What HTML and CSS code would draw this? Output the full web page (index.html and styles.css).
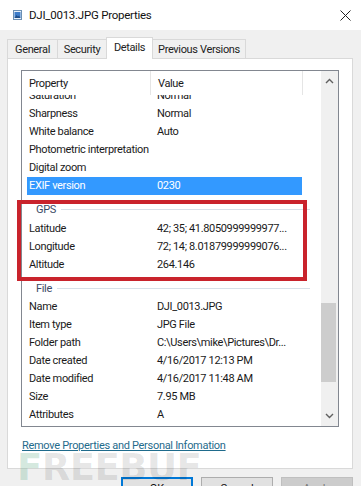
FILE: index.html
```html
<!DOCTYPE html>
<html lang="en">
<head>
  <meta charset="UTF-8" />
  <title>DJI_0013.JPG Properties</title>
  <link rel="stylesheet" href="styles.css">
</head>
<body>

  <div class="window">
    <div class="titlebar">
      <svg class="fileicon" width="9" height="10" viewBox="0 0 9 10">
        <rect x="0.5" y="0.5" width="8" height="9" fill="#e8f0f8" stroke="#6b8fb3"/>
        <rect x="1.5" y="2" width="6" height="6" fill="#3d7cc9"/>
        <path d="M1.5 8 L3.5 5 L5 6.5 L6 5.5 L7.5 8 Z" fill="#1f4f8a"/>
      </svg>
      <span class="title">DJI_0013.JPG Properties</span>
      <svg class="close" width="11" height="11" viewBox="0 0 11 11">
        <path d="M0.5 0.5 L10.5 10.5 M10.5 0.5 L0.5 10.5" stroke="#222" stroke-width="1"/>
      </svg>
    </div>

    <div class="content">
      <div class="tabs">
        <div class="tab t-general">General</div>
        <div class="tab t-security">Security</div>
        <div class="tab t-details active">Details</div>
        <div class="tab t-previous">Previous Versions</div>
      </div>

      <div class="panel">
        <div class="listview">
          <div class="list">
            <div class="header">
              <div class="hcol first">Property</div>
              <div class="hcol second">Value</div>
            </div>
            <div class="rows">
              <div class="rows-inner">
                <div class="row"><span class="name">Saturation</span><span class="value">Normal</span></div>
                <div class="row"><span class="name">Sharpness</span><span class="value">Normal</span></div>
                <div class="row"><span class="name">White balance</span><span class="value">Auto</span></div>
                <div class="row"><span class="name">Photometric interpretation</span><span class="value"></span></div>
                <div class="row"><span class="name">Digital zoom</span><span class="value"></span></div>
                <div class="row selected"><span class="name">EXIF version</span><span class="value">0230</span></div>

                <div class="group first-group"><span>GPS</span><i></i></div>
                <div class="row"><span class="name">Latitude</span><span class="value">42; 35; 41.8050999999977...</span></div>
                <div class="row"><span class="name">Longitude</span><span class="value">72; 14; 8.01879999999076...</span></div>
                <div class="row"><span class="name">Altitude</span><span class="value">264.146</span></div>

                <div class="group"><span>File</span><i></i></div>
                <div class="row"><span class="name">Name</span><span class="value">DJI_0013.JPG</span></div>
                <div class="row"><span class="name">Item type</span><span class="value">JPG File</span></div>
                <div class="row"><span class="name">Folder path</span><span class="value">C:\Users\mike\Pictures\Dr...</span></div>
                <div class="row"><span class="name">Date created</span><span class="value">4/16/2017 12:13 PM</span></div>
                <div class="row"><span class="name">Date modified</span><span class="value">4/16/2017 11:48 AM</span></div>
                <div class="row"><span class="name">Size</span><span class="value">7.95 MB</span></div>
                <div class="row"><span class="name">Attributes</span><span class="value">A</span></div>
              </div>
            </div>
          </div>
          <div class="scrollbar">
            <svg class="arrow" width="9" height="6" viewBox="0 0 9 6">
              <path d="M1 5 L4.5 1.5 L8 5" fill="none" stroke="#606060" stroke-width="1.4"/>
            </svg>
            <div class="track">
              <div class="thumb"></div>
            </div>
            <svg class="arrow" width="9" height="6" viewBox="0 0 9 6">
              <path d="M1 1 L4.5 4.5 L8 1" fill="none" stroke="#606060" stroke-width="1.4"/>
            </svg>
          </div>
        </div>

        <a class="link" href="#">Remove Properties and Personal Infomation</a>
      </div>

      <div class="buttons">
        <button class="btn default">OK</button>
        <button class="btn">Cancel</button>
        <button class="btn disabled">Apply</button>
      </div>
    </div>

    <div class="highlight"></div>
    <div class="watermark"><span class="mint">F</span>REEBUF</div>
  </div>

</body>
</html>
```

FILE: styles.css
```css
body {
  margin: 0;
  background-color: #f0f0f0;
  font-family: Roboto, "Liberation Sans", sans-serif;
  font-size: 11px;
  letter-spacing: -0.35px;
  color: #1a1a1a;
}

.window {
  position: relative;
  width: 361px;
  height: 486px;
  overflow: hidden;
  background-color: #f0f0f0;
}

.titlebar {
  height: 30px;
  background-color: #fff;
  display: flex;
  align-items: center;
  padding-left: 13px;
  padding-right: 10px;
}

.fileicon {
  margin-right: 7px;
}

.title {
  flex: 1;
  font-size: 11.5px;
  letter-spacing: -0.25px;
  color: #111;
}

.close {
  margin-top: 1px;
}

.content {
  padding: 0 8px 0 7px;
}

.tabs {
  display: flex;
  align-items: flex-end;
  height: 28px;
}

.tab {
  height: 19px;
  line-height: 19px;
  text-align: center;
  border: 1px solid #d9d9d9;
  border-bottom: none;
  margin-right: -1px;
  color: #222;
  box-sizing: border-box;
}

.t-general { width: 51px; }
.t-security { width: 50px; }
.t-details { width: 47px; }
.t-previous { width: 94px; }

.tab.active {
  height: 22px;
  line-height: 19px;
  background-color: #fff;
  position: relative;
  z-index: 1;
  margin-bottom: -1px;
}

.panel {
  height: 411px;
  box-sizing: border-box;
  background-color: #fff;
  border: 1px solid #d9d9d9;
  padding: 11px 13px 0 13px;
}

.listview {
  width: 318px;
  height: 357px;
  box-sizing: border-box;
  border: 1px solid #828790;
  display: flex;
}

.list {
  flex: 1;
  display: flex;
  flex-direction: column;
  overflow: hidden;
}

.header {
  height: 24px;
  display: flex;
  flex-shrink: 0;
  background-color: #fff;
  position: relative;
  z-index: 1;
}

.hcol {
  line-height: 20px;
  padding-top: 3px;
  padding-left: 7px;
  box-sizing: border-box;
  border-right: 1px solid #e5e5e5;
  color: #1a1a1a;
}

.hcol.first {
  width: 129px;
}

.hcol.second {
  width: 152px;
}

.rows {
  flex: 1;
  overflow: hidden;
}

.rows-inner {
  margin-top: -8px;
}

.row {
  height: 18px;
  line-height: 18px;
  margin-left: 5px;
  width: 275px;
  display: flex;
  white-space: nowrap;
}

.row .name {
  width: 128px;
  padding-left: 2px;
}

.row .value {
  flex: 1;
}

.row.selected {
  background-color: #3399ff;
  color: #fff;
}

.group {
  height: 24px;
  margin-left: 5px;
  width: 283px;
  display: flex;
  align-items: center;
  padding-top: 4px;
  box-sizing: border-box;
}

.group.first-group {
  height: 25px;
}

.group span {
  padding-left: 9px;
  padding-right: 5px;
  color: #3c4a66;
}

.group i {
  flex: 1;
  height: 1px;
  background-color: #d8e0e8;
}

.scrollbar {
  width: 17px;
  background-color: #f0f0f0;
  display: flex;
  flex-direction: column;
  align-items: center;
}

.arrow {
  margin: 7px 0;
}

.track {
  flex: 1;
  width: 100%;
  display: flex;
  flex-direction: column;
  justify-content: flex-end;
  padding-bottom: 24px;
  box-sizing: border-box;
}

.thumb {
  height: 79px;
  width: 15px;
  background-color: #cdcdcd;
}

.link {
  display: inline-block;
  margin-top: 12px;
  margin-left: 1px;
  color: #1f6b8c;
  font-size: 11px;
  letter-spacing: -0.3px;
}

.buttons {
  display: flex;
  justify-content: flex-end;
  gap: 8px;
  margin-top: 8px;
}

.btn {
  width: 72px;
  height: 23px;
  font-family: Roboto, "Liberation Sans", sans-serif;
  font-size: 11px;
  background-color: #e1e1e1;
  border: 1px solid #adadad;
  color: #111;
  padding: 0;
}

.btn.default {
  border: 2px solid #0078d7;
}

.btn.disabled {
  background-color: #cccccc;
  border-color: #bfbfbf;
  color: #777;
}

.highlight {
  position: absolute;
  left: 17px;
  top: 200px;
  width: 290px;
  height: 81px;
  box-sizing: border-box;
  border: 4px solid #c9232c;
}

.watermark {
  position: absolute;
  left: 17px;
  top: 446px;
  font-family: "DejaVu Sans", sans-serif;
  font-weight: bold;
  font-size: 37px;
  letter-spacing: -0.5px;
  color: rgba(0, 0, 0, 0.1);
}

.watermark .mint {
  color: rgba(90, 170, 130, 0.25);
}
```
